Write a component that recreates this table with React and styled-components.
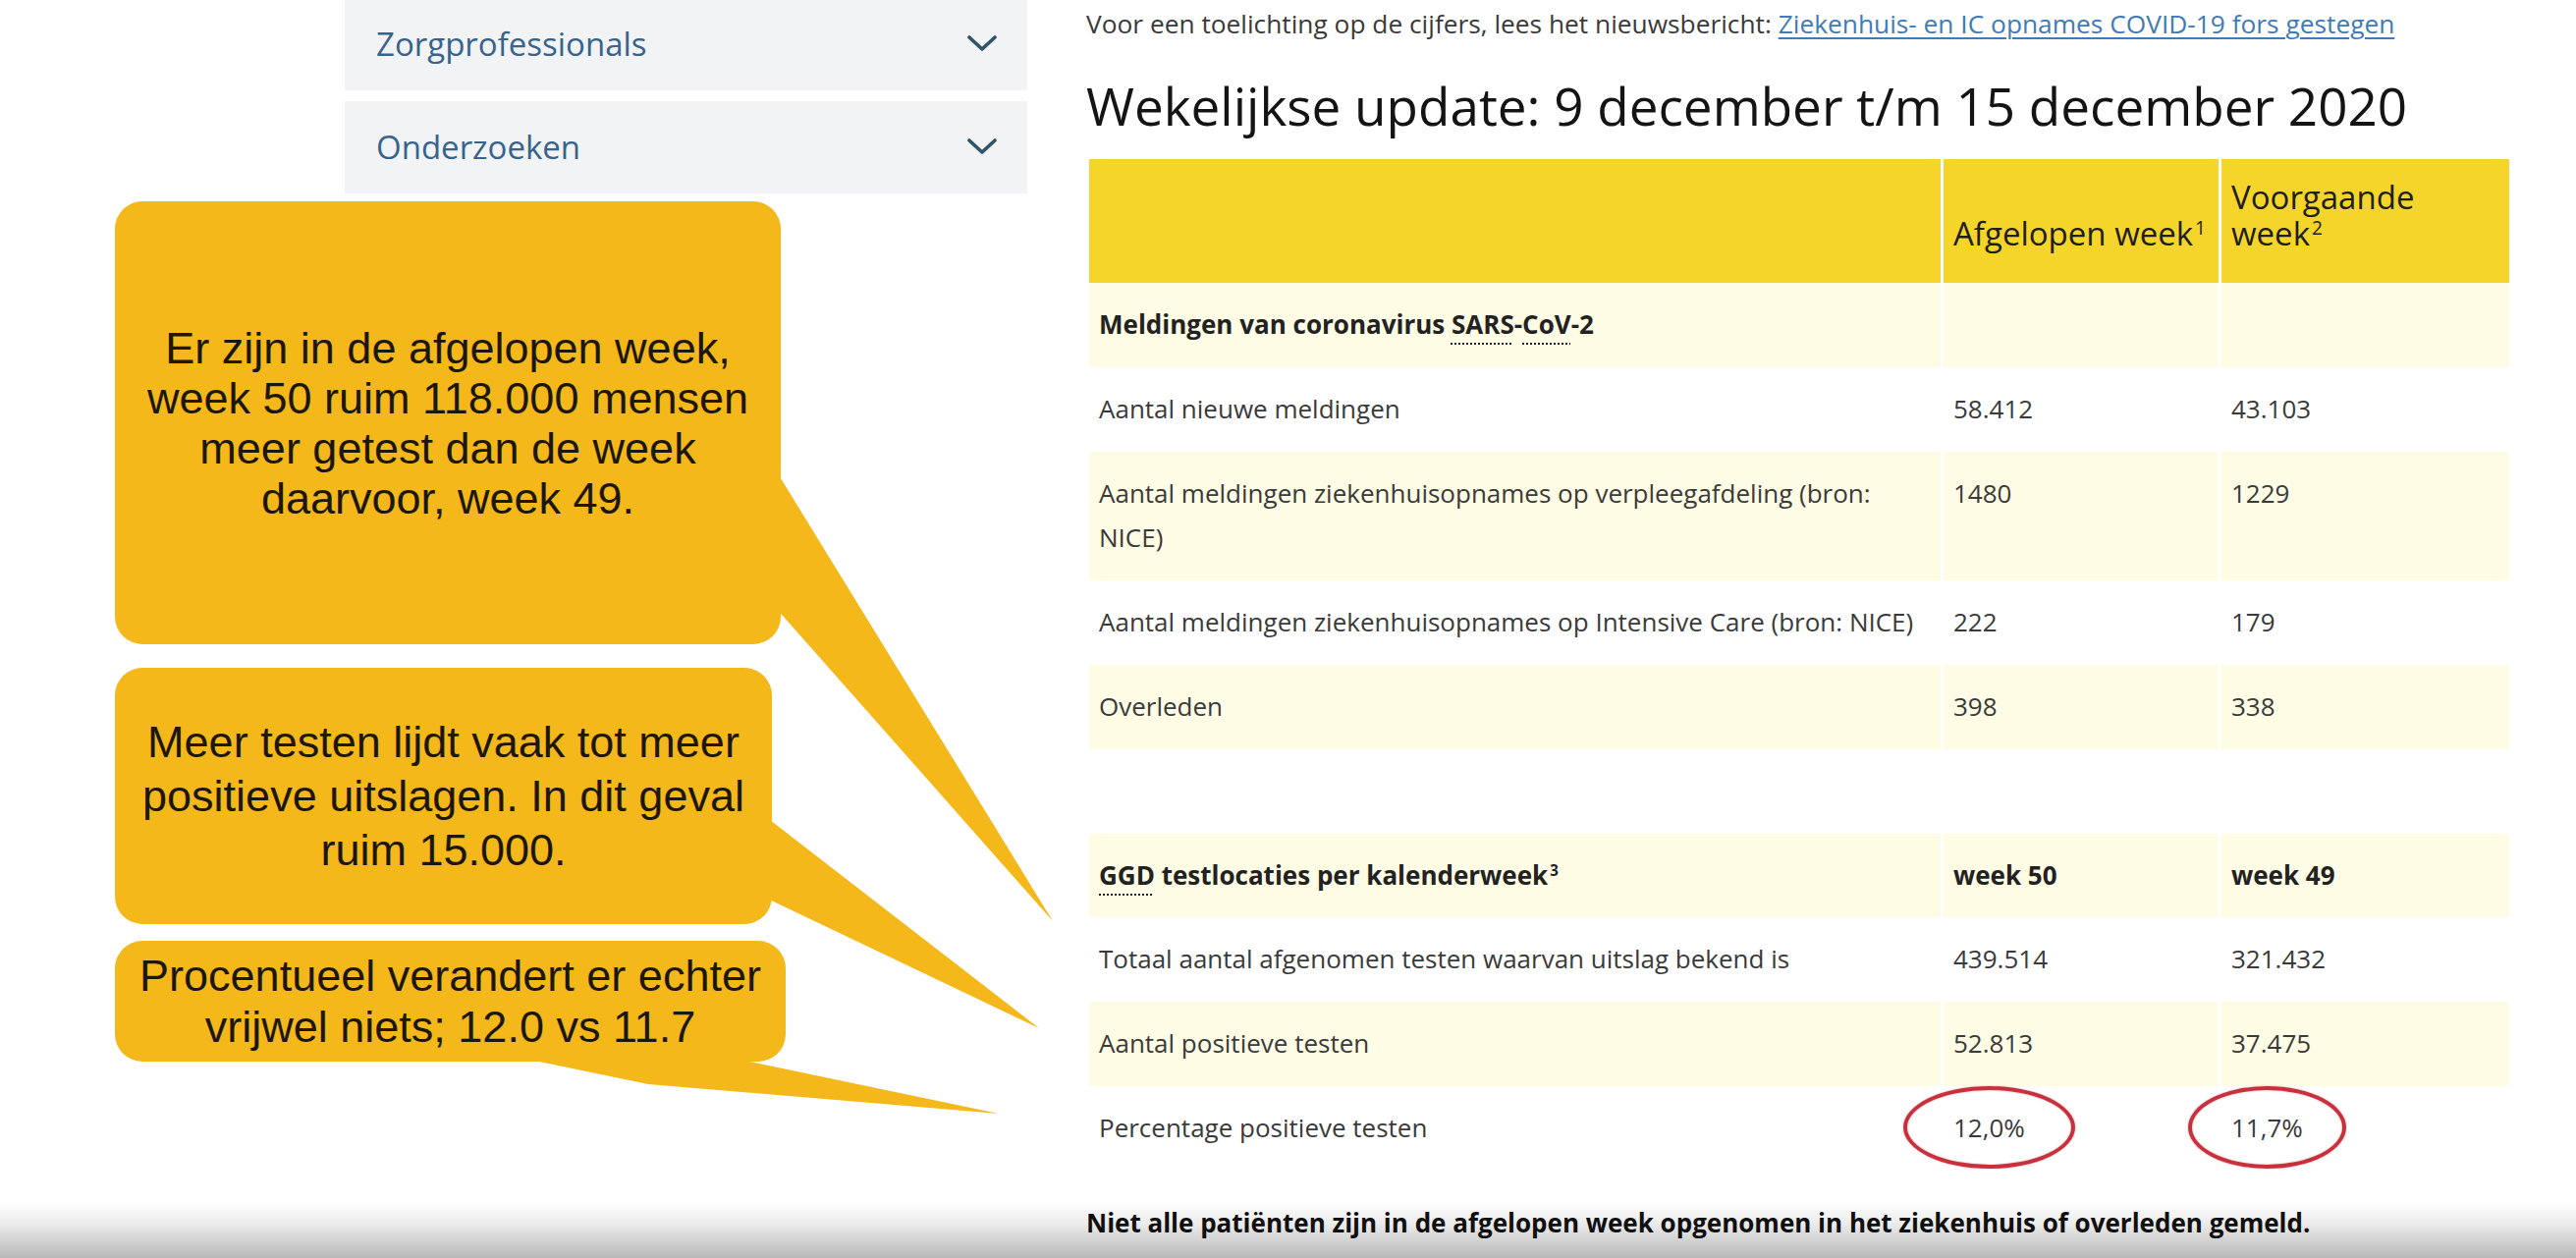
import React from 'react';
import styled, { createGlobalStyle } from 'styled-components';

const GlobalStyle = createGlobalStyle`
  html, body { margin: 0; padding: 0; background: #ffffff; }
  body { font-family: "Open Sans", "Noto Sans", sans-serif; }
  * { box-sizing: border-box; }
`;

const CALLOUT = '#f4b81a';

const Stage = styled.div`
  position: relative;
  width: 2623px;
  height: 1281px;
  overflow: hidden;
  background: #ffffff;
  display: grid;
  grid-template-columns: 1106px 1452px;
  align-items: start;
`;

const LeftColumn = styled.aside`
  display: flex;
  flex-direction: column;
  padding-left: 117px;
`;

const Nav = styled.nav`
  display: flex;
  flex-direction: column;
  gap: 11px;
  margin-left: 234px;
  width: 695px;
`;

const NavItem = styled.div`
  height: ${p => p.$h}px;
  display: flex;
  align-items: center;
  justify-content: space-between;
  padding: 0 31px ${p => p.$pb || 0}px 32px;
  background: #f2f3f5;
  color: #37638c;
  font-size: 33px;
`;

const Chevron = () => (
  <svg width="30" height="16" viewBox="0 0 30 16" aria-hidden="true">
    <polyline points="2,2 15,14 28,2" fill="none" stroke="#2e5468" strokeWidth="3.6" strokeLinecap="round" strokeLinejoin="round" />
  </svg>
);

const Callout = styled.div`
  width: ${p => p.$w}px;
  height: ${p => p.$h}px;
  margin-top: ${p => p.$mt}px;
  background: ${CALLOUT};
  border-radius: 28px;
  display: flex;
  align-items: center;
  justify-content: center;
  text-align: center;
  padding: 0 16px;
  font-family: "Liberation Sans", Arial, sans-serif;
  font-size: 45px;
  line-height: ${p => p.$lh}px;
  color: #1c1709;
  white-space: nowrap;
`;

const TailLayer = styled.svg`
  position: absolute;
  left: 0;
  top: 0;
  width: 2623px;
  height: 1281px;
  pointer-events: none;
`;

const Main = styled.main`
  display: flex;
  flex-direction: column;
  padding-top: 4px;
`;

const Intro = styled.p`
  margin: 0;
  font-size: 26.3px;
  line-height: 40px;
  color: #3a3a3a;
  white-space: nowrap;
`;

const IntroLink = styled.a`
  color: #3f7bb6;
  text-decoration: underline;
  text-underline-offset: 4px;
  text-decoration-thickness: 2px;
`;

const Title = styled.h1`
  margin: 29px 0 19px;
  font-size: 53px;
  font-weight: 400;
  line-height: 70px;
  color: #141414;
  white-space: nowrap;
`;

const Table = styled.table`
  width: 1452px;
  table-layout: fixed;
  border-collapse: separate;
  border-spacing: 3px 0;
  margin-top: ${p => p.$mt || 0}px;
  font-size: 26px;
  color: #3a3a3a;
`;

const Col = styled.col`
  width: ${p => p.$w}px;
`;

const HeadRow = styled.tr`
  background: #f5d52a;
`;

const HeadCell = styled.th`
  height: 126px;
  padding: 0 10px 26px;
  vertical-align: bottom;
  text-align: left;
  font-size: 33px;
  font-weight: 400;
  line-height: 37px;
  color: #1e1e1e;
  white-space: nowrap;
`;

const Row = styled.tr`
  background: ${p => (p.$light ? '#fefce4' : 'transparent')};
`;

const Cell = styled.td`
  padding: 20px 10px ${p => (p.$compact ? 16 : 21)}px;
  line-height: 45px;
  vertical-align: top;
  font-weight: ${p => (p.$bold ? 700 : 400)};
  color: ${p => (p.$bold ? '#222222' : '#3a3a3a')};
`;

const Sup = styled.span`
  position: relative;
  top: -0.6em;
  font-size: 0.58em;
  margin-left: 2px;
`;

const Abbr = styled.abbr`
  text-decoration: underline dotted 2px;
  text-underline-offset: 9px;
`;

const Circled = styled.span`
  position: relative;
  display: inline-block;
  &::after {
    content: "";
    position: absolute;
    left: -${p => p.$px}px;
    right: -${p => p.$px}px;
    top: -20px;
    bottom: -19px;
    border: 4px solid #c7303c;
    border-radius: 50%;
    box-shadow: 0 0 2px rgba(199, 48, 60, 0.45), inset 0 0 2px rgba(199, 48, 60, 0.45);
  }
`;

const Footnote = styled.p`
  margin: 33px 0 0;
  font-size: 26px;
  font-weight: 700;
  line-height: 40px;
  color: #111111;
  white-space: nowrap;
`;

const BottomShade = styled.div`
  position: absolute;
  left: 0;
  right: 0;
  bottom: 0;
  height: 58px;
  background: linear-gradient(to bottom, rgba(0, 0, 0, 0) 0%, rgba(0, 0, 0, 0.08) 40%, rgba(0, 0, 0, 0.28) 100%);
  pointer-events: none;
`;

const Cols = () => (
  <colgroup>
    <Col $w={867} />
    <Col $w={280} />
    <Col $w={293} />
  </colgroup>
);

const meldingen = [
  { label: 'Aantal nieuwe meldingen', a: '58.412', b: '43.103', light: false },
  { label: 'Aantal meldingen ziekenhuisopnames op verpleegafdeling (bron: NICE)', a: '1480', b: '1229', light: true },
  { label: 'Aantal meldingen ziekenhuisopnames op Intensive Care (bron: NICE)', a: '222', b: '179', light: false },
  { label: 'Overleden', a: '398', b: '338', light: true },
];

export default function App() {
  return (
    <>
      <GlobalStyle />
      <Stage>
        <LeftColumn>
          <Nav>
            <NavItem $h={92} $pb={4}>Zorgprofessionals<Chevron /></NavItem>
            <NavItem $h={94} $pb={2}>Onderzoeken<Chevron /></NavItem>
          </Nav>
          <Callout $w={678} $h={451} $mt={8} $lh={51}>
            <div>
              Er zijn in de afgelopen week,<br />
              week 50 ruim 118.000 mensen<br />
              meer getest dan de week<br />
              daarvoor, week 49.
            </div>
          </Callout>
          <Callout $w={669} $h={261} $mt={24} $lh={55}>
            <div>
              Meer testen lijdt vaak tot meer<br />
              positieve uitslagen. In dit geval<br />
              ruim 15.000.
            </div>
          </Callout>
          <Callout $w={683} $h={123} $mt={17} $lh={52}>
            <div>
              Procentueel verandert er echter<br />
              vrijwel niets; 12.0 vs 11.7
            </div>
          </Callout>
        </LeftColumn>

        <Main>
          <Intro>
            Voor een toelichting op de cijfers, lees het nieuwsbericht:{' '}
            <IntroLink href="#">Ziekenhuis- en IC opnames COVID-19 fors gestegen</IntroLink>
          </Intro>
          <Title>Wekelijkse update: 9 december t/m 15 december 2020</Title>

          <Table>
            <Cols />
            <thead>
              <HeadRow>
                <HeadCell />
                <HeadCell>Afgelopen week<Sup>1</Sup></HeadCell>
                <HeadCell>Voorgaande<br />week<Sup>2</Sup></HeadCell>
              </HeadRow>
            </thead>
            <tbody>
              <Row $light>
                <Cell $bold>
                  Meldingen van coronavirus <Abbr title="Severe Acute Respiratory Syndrome">SARS</Abbr>-<Abbr title="Coronavirus">CoV</Abbr>-2
                </Cell>
                <Cell />
                <Cell />
              </Row>
              {meldingen.map(r => (
                <Row key={r.label} $light={r.light}>
                  <Cell>{r.label}</Cell>
                  <Cell>{r.a}</Cell>
                  <Cell>{r.b}</Cell>
                </Row>
              ))}
            </tbody>
          </Table>

          <Table $mt={86}>
            <Cols />
            <tbody>
              <Row $light>
                <Cell $bold $compact>
                  <Abbr title="Gemeentelijke Gezondheidsdienst">GGD</Abbr> testlocaties per kalenderweek<Sup>3</Sup>
                </Cell>
                <Cell $bold $compact>week 50</Cell>
                <Cell $bold $compact>week 49</Cell>
              </Row>
              <Row>
                <Cell>Totaal aantal afgenomen testen waarvan uitslag bekend is</Cell>
                <Cell>439.514</Cell>
                <Cell>321.432</Cell>
              </Row>
              <Row $light>
                <Cell>Aantal positieve testen</Cell>
                <Cell>52.813</Cell>
                <Cell>37.475</Cell>
              </Row>
              <Row>
                <Cell>Percentage positieve testen</Cell>
                <Cell><Circled $px={51}>12,0%</Circled></Cell>
                <Cell><Circled $px={44}>11,7%</Circled></Cell>
              </Row>
            </tbody>
          </Table>

          <Footnote>Niet alle patiënten zijn in de afgelopen week opgenomen in het ziekenhuis of overleden gemeld.</Footnote>
        </Main>

        <TailLayer viewBox="0 0 2623 1281" aria-hidden="true">
          <polygon points="782,466 1072,938 782,610" fill={CALLOUT} />
          <polygon points="775,828 1058,1047 775,912" fill={CALLOUT} />
          <polygon points="505,1072 720,1072 1017,1134 660,1104" fill={CALLOUT} />
        </TailLayer>
        <BottomShade />
      </Stage>
    </>
  );
}
